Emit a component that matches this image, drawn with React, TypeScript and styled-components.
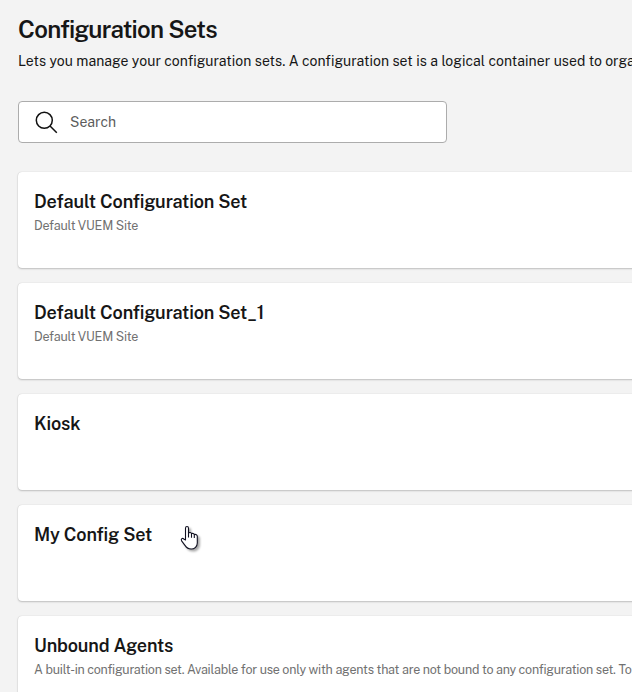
import React from "react";
import styled, { createGlobalStyle } from "styled-components";

const GlobalStyle = createGlobalStyle`
  *, *::before, *::after { box-sizing: border-box; }
  html, body { margin: 0; height: 100%; overflow: hidden; background: #f3f3f3; }
  body { font-family: "Public Sans", Roboto, sans-serif; color: #161616; }
`;

const Page = styled.main`
  display: flex;
  flex-direction: column;
  height: 692px;
  padding: 14px 0 0 18px;
  overflow: hidden;
  white-space: nowrap;
`;

const Title = styled.h1`
  margin: 0;
  font-size: 24px;
  line-height: 30px;
  font-weight: 600;
  letter-spacing: -0.74px;
`;

const Description = styled.p`
  margin: 7px 0 0;
  font-size: 14px;
  line-height: 20px;
  letter-spacing: 0.04px;
`;

const SearchBox = styled.label`
  display: flex;
  align-items: center;
  flex: none;
  width: 429px;
  height: 42px;
  margin-top: 30px;
  padding-left: 16px;
  gap: 12px;
  background: #fff;
  border: 1px solid #acacac;
  border-radius: 4px;
`;

const SearchInput = styled.input`
  flex: 1;
  border: 0;
  outline: 0;
  padding: 0;
  font: inherit;
  font-size: 14px;
  line-height: 20px;
  letter-spacing: 0.05px;
  background: transparent;
  &::placeholder { color: #5c5c5c; opacity: 1; }
`;

const CardList = styled.section`
  display: flex;
  flex-direction: column;
  gap: 15px;
  margin-top: 29px;
`;

const Card = styled.article`
  position: relative;
  flex: none;
  width: 720px;
  height: 96px;
  padding: 18px 16px;
  background: #fff;
  border-radius: 4px;
  box-shadow: 0 0 1px rgba(0, 0, 0, 0.22), 0 1px 2px rgba(0, 0, 0, 0.2);
`;

const CardTitle = styled.h2`
  margin: 0;
  font-size: 18px;
  line-height: 24px;
  font-weight: 600;
  letter-spacing: -0.16px;
`;

const CardText = styled.p`
  margin: 3px 0 0;
  font-size: 12.5px;
  line-height: 18px;
  letter-spacing: -0.225px;
  color: #717171;
`;

const Pointer = styled.svg`
  position: absolute;
  left: 162px;
  top: 20px;
  filter: drop-shadow(2px 2px 1px rgba(0, 0, 0, 0.35));
`;

const SearchIcon = () => (
  <svg width="23" height="23" viewBox="0 0 23 23" fill="none" stroke="#111" strokeWidth="1.5">
    <circle cx="9.3" cy="9.3" r="8" />
    <path d="M15 15l6.8 6.8" />
  </svg>
);

const HandPointer = () => (
  <Pointer width="20" height="26" viewBox="0 0 20 26">
    <path
      d="M5.5 15V3.2c0-2.3 3-2.3 3 0V8c1.1-.9 2.6-.5 3 .6 1.2-.6 2.4-.1 2.8.9 1.5-.5 3 .3 3 1.8V18c0 3.4-2.7 6-6.1 6-3 0-4.8-1.4-6.2-3.6L1.6 15.8c-1-2 .8-3.2 2.2-1.8z"
      fill="#fff"
      stroke="#101020"
      strokeWidth="1.1"
      strokeLinejoin="round"
    />
    <path d="M8.5 7.5v5M11.5 8.5v4.2M14.3 9.5v3.4" stroke="#101020" strokeWidth="1.1" />
  </Pointer>
);

const sets = [
  { name: "Default Configuration Set", text: "Default VUEM Site" },
  { name: "Default Configuration Set_1", text: "Default VUEM Site" },
  { name: "Kiosk" },
  { name: "My Config Set", hovered: true },
  {
    name: "Unbound Agents",
    text: "A built-in configuration set. Available for use only with agents that are not bound to any configuration set. To",
  },
];

export default function App() {
  return (
    <>
      <GlobalStyle />
      <Page>
        <Title>Configuration Sets</Title>
        <Description>
          Lets you manage your configuration sets. A configuration set is a logical container used to organize
        </Description>
        <SearchBox>
          <SearchIcon />
          <SearchInput placeholder="Search" />
        </SearchBox>
        <CardList>
          {sets.map((set) => (
            <Card key={set.name}>
              <CardTitle>{set.name}</CardTitle>
              {set.text && <CardText>{set.text}</CardText>}
              {set.hovered && <HandPointer />}
            </Card>
          ))}
        </CardList>
      </Page>
    </>
  );
}
